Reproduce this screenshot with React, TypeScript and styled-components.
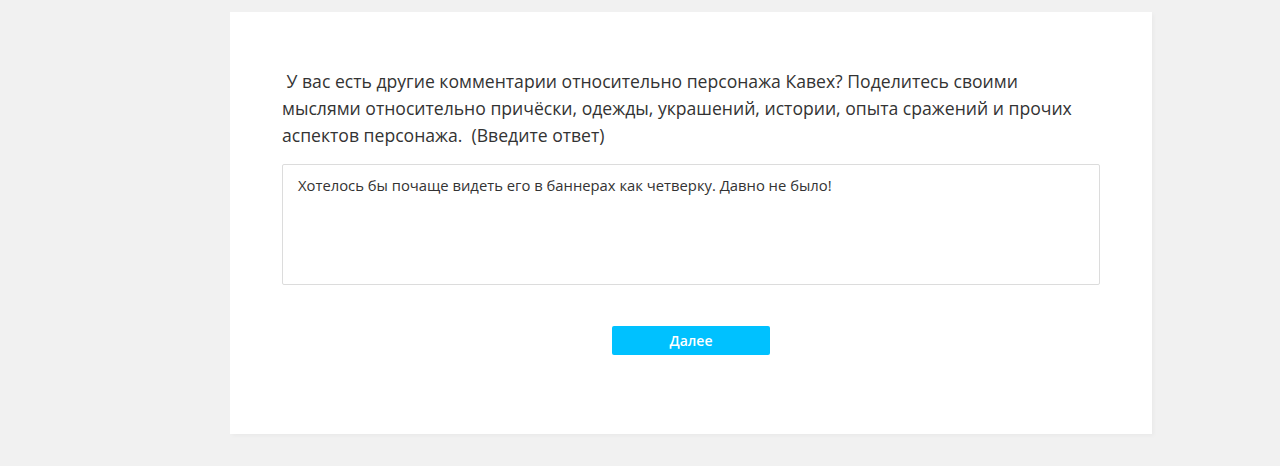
import React from 'react';
import styled, { createGlobalStyle } from 'styled-components';

const GlobalStyle = createGlobalStyle`
  html, body {
    margin: 0;
    padding: 0;
    background: #f1f1f1;
  }
  body {
    font-family: "Open Sans", "Noto Sans", sans-serif;
    color: #333;
  }
`;

export default function App() {
  return (
    <>
      <GlobalStyle />
      <Page>
        <Card>
          <Question>
            &nbsp;У вас есть другие комментарии относительно персонажа Кавех? Поделитесь своими
            мыслями относительно причёски, одежды, украшений, истории, опыта сражений и прочих
            аспектов персонажа.&nbsp; (Введите ответ)
          </Question>
          <Answer
            defaultValue="Хотелось бы почаще видеть его в баннерах как четверку. Давно не было!"
          />
          <Actions>
            <NextButton type="button">Далее</NextButton>
          </Actions>
        </Card>
      </Page>
    </>
  );
}

const Page = styled.div`
  width: 1280px;
  height: 466px;
  padding-top: 12px;
  padding-left: 230px;
  box-sizing: border-box;
`;

const Card = styled.main`
  width: 922px;
  height: 422px;
  background: #fff;
  box-shadow: 2px 2px 4px rgba(0, 0, 0, 0.03);
  padding: 56px 52px 0 52px;
  box-sizing: border-box;
  display: flex;
  flex-direction: column;
`;

const Question = styled.p`
  margin: 0;
  max-width: 800px;
  font-size: 17.6px;
  line-height: 27px;
  color: #333;
`;

const Answer = styled.textarea`
  margin-top: 15px;
  width: 818px;
  height: 121px;
  box-sizing: border-box;
  border: 1px solid #dcdcdc;
  border-radius: 2px;
  padding: 10px 15px;
  font-family: "Open Sans", "Noto Sans", sans-serif;
  font-size: 14.8px;
  line-height: 20px;
  color: #333;
  resize: none;
  outline: none;
`;

const Actions = styled.div`
  display: flex;
  justify-content: center;
  margin-top: 41px;
`;

const NextButton = styled.button`
  width: 158px;
  height: 29px;
  border: none;
  border-radius: 2px;
  background: #00c1ff;
  color: #fff;
  font-family: "Open Sans", "Noto Sans", sans-serif;
  font-size: 14px;
  font-weight: 600;
  cursor: pointer;
`;
